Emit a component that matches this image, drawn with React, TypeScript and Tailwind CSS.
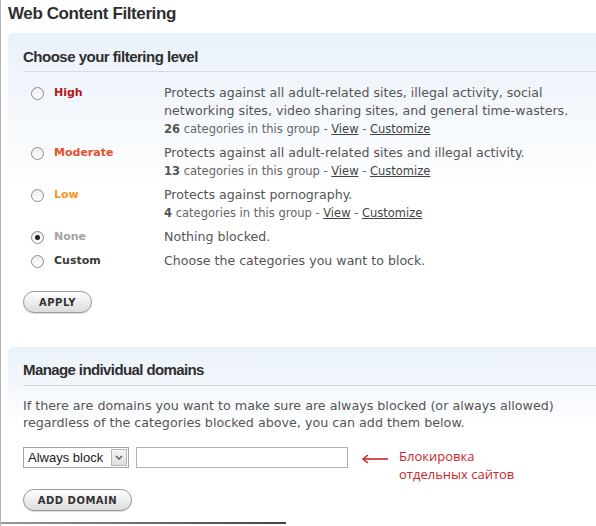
import React from 'react';

type Level = {
  name: string;
  color: string;
  desc: string[];
  count?: number;
  checked?: boolean;
};

const levels: Level[] = [
  {
    name: 'High',
    color: 'text-[#b3151b]',
    desc: [
      'Protects against all adult-related sites, illegal activity, social',
      'networking sites, video sharing sites, and general time-wasters.',
    ],
    count: 26,
  },
  {
    name: 'Moderate',
    color: 'text-[#e5502b]',
    desc: ['Protects against all adult-related sites and illegal activity.'],
    count: 13,
  },
  {
    name: 'Low',
    color: 'text-[#f7941e]',
    desc: ['Protects against pornography.'],
    count: 4,
  },
  { name: 'None', color: 'text-[#a3a3a3]', desc: ['Nothing blocked.'], checked: true },
  { name: 'Custom', color: 'text-[#3a3a3a]', desc: ['Choose the categories you want to block.'] },
];

function Radio({ checked }: { checked?: boolean }) {
  return (
    <span className="mt-[3px] flex h-[13px] w-[13px] shrink-0 items-center justify-center rounded-full border border-[#8a8a8a] bg-gradient-to-b from-[#eeeeee] to-white">
      {checked && <span className="h-[5px] w-[5px] rounded-full bg-[#222]" />}
    </span>
  );
}

function PillButton({ label, width }: { label: string; width: string }) {
  return (
    <button
      className={`${width} block h-[22px] rounded-full border border-[#9a9a9a] bg-gradient-to-b from-white to-[#dcdcdc] text-[10px] font-bold tracking-[0.5px] text-[#333] shadow-[0_1px_1px_rgba(0,0,0,0.15)] [font-family:'DejaVu_Sans',Verdana,sans-serif]`}
    >
      {label}
    </button>
  );
}

export default function App() {
  return (
    <div className="relative h-[526px] w-[596px] overflow-hidden border-l border-[#b5b5b5] bg-white text-[#555] [font-family:'DejaVu_Sans',Verdana,sans-serif]">
      <h1 className="pl-[7px] pt-[4px] text-[17px] font-bold leading-[20px] tracking-[-0.4px] text-[#2e2e2e] [font-family:'Liberation_Sans',Arial,sans-serif]">
        Web Content Filtering
      </h1>

      {/* Filtering level panel */}
      <div className="ml-[7px] mt-[9px] rounded-tl-[6px] bg-gradient-to-b from-[#e9f1f9] via-white to-white pb-[34px] pl-[15px]">
        <h2 className="border-b border-[#d8d8d8] pb-[5px] pt-[15px] text-[15px] font-bold leading-[18px] tracking-[-0.5px] text-[#2e2e2e] [font-family:'Liberation_Sans',Arial,sans-serif]">
          Choose your filtering level
        </h2>

        <div className="mt-[12px] flex flex-col gap-[6px] pl-[8px]">
          {levels.map((lv) => (
            <div key={lv.name} className="flex">
              <Radio checked={lv.checked} />
              <span className={`ml-[10px] w-[110px] shrink-0 text-[11px] font-bold leading-[18px] ${lv.color}`}>
                {lv.name}
              </span>
              <div className="text-[12.6px] leading-[18px] text-[#555]">
                {lv.desc.map((d) => (
                  <div key={d}>{d}</div>
                ))}
                {lv.count !== undefined && (
                  <div className="text-[11.5px] leading-[18px] text-[#666]">
                    <b className="text-[#555]">{lv.count}</b> categories in this group -{' '}
                    <span className="text-[#444] underline">View</span> -{' '}
                    <span className="text-[#444] underline">Customize</span>
                  </div>
                )}
              </div>
            </div>
          ))}
        </div>

        <div className="mt-[21px]">
          <PillButton label="APPLY" width="w-[69px]" />
        </div>
      </div>

      {/* Manage domains panel */}
      <div className="ml-[7px] rounded-tl-[6px] bg-gradient-to-b from-[#e9f1f9] via-white to-white pl-[15px]">
        <h2 className="border-b border-[#d8d8d8] pb-[6px] pt-[14px] text-[15px] font-bold leading-[18px] tracking-[-0.6px] text-[#2e2e2e] [font-family:'Liberation_Sans',Arial,sans-serif]">
          Manage individual domains
        </h2>
        <p className="mt-[11px] text-[12.7px] leading-[17px] text-[#555]">
          If there are domains you want to make sure are always blocked (or always allowed)
          <br />
          regardless of the categories blocked above, you can add them below.
        </p>

        <div className="mt-[16px] flex items-start">
          <div className="flex h-[21px] w-[106px] items-center border border-[#a5a5a5] bg-white pl-[4px] text-[13px] text-[#222] [font-family:'Liberation_Sans',Arial,sans-serif]">
            <span className="flex-1">Always block</span>
            <span className="mr-[1px] flex h-[17px] w-[16px] items-center justify-center border border-[#b8b8b8] bg-gradient-to-b from-[#f6f6f6] to-[#dedede]">
              <svg width="8" height="5" viewBox="0 0 8 5">
                <path d="M1 1 L4 4 L7 1" fill="none" stroke="#555" strokeWidth="1.3" />
              </svg>
            </span>
          </div>
          <div className="ml-[7px] h-[21px] w-[212px] border border-[#b0b0b0] bg-white" />
          <svg className="ml-[13px] mt-[7px]" width="28" height="10" viewBox="0 0 28 10">
            <path d="M27 5 H3" stroke="#c8262e" strokeWidth="1.6" />
            <path d="M7 1 L2 5 L7 9" fill="none" stroke="#c8262e" strokeWidth="1.6" />
          </svg>
          <div className="ml-[10px] text-[13px] leading-[18px] text-[#c8262e] [font-family:'Open_Sans','Noto_Sans',sans-serif]">
            Блокировка
            <br />
            отдельных сайтов
          </div>
        </div>

        <div className="mt-[6px]">
          <PillButton label="ADD DOMAIN" width="w-[109px]" />
        </div>
      </div>

      <div className="absolute bottom-[2px] left-0 h-[2px] w-[285px] bg-gradient-to-r from-[#999] to-[#444]" />
    </div>
  );
}
